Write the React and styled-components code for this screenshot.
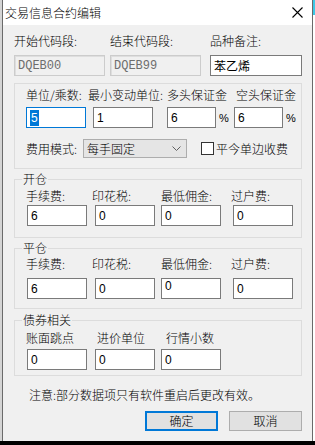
import React from 'react';
import styled, { createGlobalStyle } from 'styled-components';

const GlobalStyle = createGlobalStyle`
  html, body {
    margin: 0;
    padding: 0;
    background: #000;
    width: 315px;
    height: 445px;
    overflow: hidden;
  }
  * { box-sizing: border-box; }
`;

const CJK = `"Noto Sans CJK SC", "Noto Sans", sans-serif`;

const Screen = styled.div`
  width: 315px;
  height: 445px;
  display: flex;
  flex-direction: column;
  background: #000;
`;

const Desk = styled.div`
  display: flex;
  height: 441px;
`;

const LeftStrip = styled.div`
  width: 2px;
  background: #d4d4d4;
`;

const RightStrip = styled.div`
  flex: 1;
  background: #fff;
  border-top: 15px solid #3cc8e6;
`;

const Window = styled.div`
  width: 311px;
  height: 441px;
  background: #f0f0f0;
  border-left: 1px solid #6a6a6a;
  border-right: 1px solid #6a6a6a;
  display: flex;
  flex-direction: column;
  font-family: ${CJK};
  font-size: 12px;
  font-weight: 300;
  color: #000;
`;

const TitleBar = styled.div`
  height: 25px;
  background: #fff;
  display: flex;
  align-items: center;
  justify-content: space-between;
  padding: 0 9px 0 2px;
  line-height: 16px;
`;

const Body = styled.div`
  padding: 8px 0 0 11px;
  display: flex;
  flex-direction: column;
`;

const TopRow = styled.div`
  display: grid;
  grid-template-columns: 96px 100px 92px;
`;

const Field = styled.div`
  display: flex;
  flex-direction: column;
  gap: ${p => p.$gap ?? 6}px;
`;

const Label = styled.span`
  display: block;
  height: 16px;
  line-height: 16px;
  white-space: nowrap;
  margin-left: ${p => p.$shift || 0}px;
`;

const Input = styled.div`
  width: ${p => p.$w || 60}px;
  height: 21px;
  background: ${p => (p.$disabled ? '#f0f0f0' : '#fff')};
  border: 1px solid ${p => (p.$focus ? '#0078d7' : p.$disabled ? '#cccccc' : '#7a7a7a')};
  box-shadow: ${p => (p.$disabled ? 'inset 1px 1px 0 #dedede' : 'none')};
  padding: 0 3px;
  display: flex;
  align-items: ${p => (p.$top ? 'flex-start' : 'center')};
  font-family: ${p => (p.$mono ? '"Liberation Mono", monospace' : p.$cjk ? CJK : '"Liberation Sans", Arial, sans-serif')};
  font-weight: 400;
  font-size: 12px;
  line-height: ${p => (p.$top ? '14px' : '16px')};
  color: ${p => (p.$disabled ? '#6d6d6d' : '#000')};
`;

const Selected = styled.span`
  background: #0078d7;
  color: #fff;
  padding: 0 1px;
`;

const Group = styled.div`
  position: relative;
  width: 288px;
  height: ${p => p.$h}px;
  margin-top: ${p => p.$mt}px;
  border: 1px solid #dcdcdc;
  padding: ${p => p.$pt}px 0 0 ${p => p.$pl ?? 12}px;
`;

const Legend = styled.span`
  position: absolute;
  top: -9px;
  left: 7px;
  padding: 0 1px;
  background: #f0f0f0;
  line-height: 16px;
`;

const Grid = styled.div`
  display: grid;
  grid-template-columns: ${p => p.$cols};
`;

const InlineBox = styled.div`
  display: flex;
  align-items: center;
  gap: 3px;
`;

const Percent = styled.span`
  font-family: "Liberation Sans", Arial, sans-serif;
  font-size: 11px;
  font-weight: 400;
`;

const ModeRow = styled.div`
  display: flex;
  align-items: center;
  margin-top: 11px;
  height: 19px;
`;

const Select = styled.div`
  width: 104px;
  height: 19px;
  margin-left: 6px;
  background: #e5e5e5;
  border: 1px solid #adadad;
  display: flex;
  align-items: center;
  justify-content: space-between;
  padding: 0 5px 0 3px;
  line-height: 16px;
`;

const CheckLabel = styled.label`
  display: flex;
  align-items: center;
  gap: 2px;
  margin-left: 14px;
  line-height: 16px;
`;

const CheckBox = styled.span`
  width: 13px;
  height: 13px;
  border: 1px solid #333;
  background: #fff;
`;

const Note = styled.div`
  margin: 11px 0 0 15px;
  line-height: 16px;
`;

const Buttons = styled.div`
  display: flex;
  justify-content: flex-end;
  gap: 11px;
  margin: 8px 10px 0 0;
`;

const Button = styled.button`
  width: 73px;
  height: 20px;
  background: #e1e1e1;
  border: ${p => (p.$primary ? '2px solid #0078d7' : '1px solid #adadad')};
  font-family: ${CJK};
  font-size: 12px;
  font-weight: 300;
  line-height: 14px;
  padding: 0;
  color: #000;
`;

const Close = () => (
  <svg width="11" height="11" viewBox="0 0 11 11">
    <path d="M0.5 0.5 L10.5 10.5 M10.5 0.5 L0.5 10.5" stroke="#000" strokeWidth="1.1" />
  </svg>
);

const Chevron = () => (
  <svg width="9" height="5" viewBox="0 0 9 5">
    <polyline points="0.5,0.5 4.5,4.5 8.5,0.5" fill="none" stroke="#606060" strokeWidth="1" />
  </svg>
);

const feeLabels = [
  ['手续费:', -1],
  ['印花税:', -3],
  ['最低佣金:', 0],
  ['过户费:', -2],
];

const FeeGroup = ({ title, mt, h, pt, gap, values, topIdx }) => (
  <Group $mt={mt} $h={h} $pt={pt}>
    <Legend>{title}</Legend>
    <Grid $cols="68px 66px 72px 60px">
      {feeLabels.map(([l, s], i) => (
        <Field key={l} $gap={gap}>
          <Label $shift={s}>{l}</Label>
          <Input $top={i === topIdx}>{values[i]}</Input>
        </Field>
      ))}
    </Grid>
  </Group>
);

const App = () => (
  <>
    <GlobalStyle />
    <Screen>
      <Desk>
        <LeftStrip />
        <Window>
          <TitleBar>
            <span>交易信息合约编辑</span>
            <Close />
          </TitleBar>
          <Body>
            <TopRow>
              <Field>
                <Label>开始代码段:</Label>
                <Input $w={91} $disabled $mono>DQEB00</Input>
              </Field>
              <Field>
                <Label>结束代码段:</Label>
                <Input $w={91} $disabled $mono>DQEB99</Input>
              </Field>
              <Field>
                <Label>品种备注:</Label>
                <Input $w={92} $cjk>苯乙烯</Input>
              </Field>
            </TopRow>

            <Group $mt={7} $h={86} $pt={3} $pl={11}>
              <Grid $cols="67px 74px 67px auto">
                <Field $gap={4}>
                  <Label>单位/乘数:</Label>
                  <Input $focus><Selected>5</Selected></Input>
                </Field>
                <Field $gap={4}>
                  <Label $shift={-5}>最小变动单位:</Label>
                  <Input>1</Input>
                </Field>
                <Field $gap={4}>
                  <Label>多头保证金</Label>
                  <InlineBox>
                    <Input $w={49}>6</Input>
                    <Percent>%</Percent>
                  </InlineBox>
                </Field>
                <Field $gap={4}>
                  <Label $shift={2}>空头保证金</Label>
                  <InlineBox>
                    <Input $w={49}>6</Input>
                    <Percent>%</Percent>
                  </InlineBox>
                </Field>
              </Grid>
              <ModeRow>
                <span>费用模式:</span>
                <Select>
                  <span>每手固定</span>
                  <Chevron />
                </Select>
                <CheckLabel>
                  <CheckBox />
                  <span>平今单边收费</span>
                </CheckLabel>
              </ModeRow>
            </Group>

            <FeeGroup title="开仓" mt={10} h={59} pt={8} gap={1} values={['6', '0', '0', '0']} />
            <FeeGroup title="平仓" mt={10} h={61} pt={7} gap={6} values={['6', '0', '0', '0']} topIdx={2} />

            <Group $mt={11} $h={56} $pt={9}>
              <Legend>债券相关</Legend>
              <Grid $cols="68px 66px 72px">
                <Field $gap={3}>
                  <Label $shift={-1}>账面跳点</Label>
                  <Input>0</Input>
                </Field>
                <Field $gap={3}>
                  <Label $shift={2}>进价单位</Label>
                  <Input>0</Input>
                </Field>
                <Field $gap={3}>
                  <Label $shift={5}>行情小数</Label>
                  <Input>0</Input>
                </Field>
              </Grid>
            </Group>

            <Note>注意:部分数据项只有软件重启后更改有效。</Note>
            <Buttons>
              <Button $primary>确定</Button>
              <Button>取消</Button>
            </Buttons>
          </Body>
        </Window>
        <RightStrip />
      </Desk>
    </Screen>
  </>
);

export default App;
